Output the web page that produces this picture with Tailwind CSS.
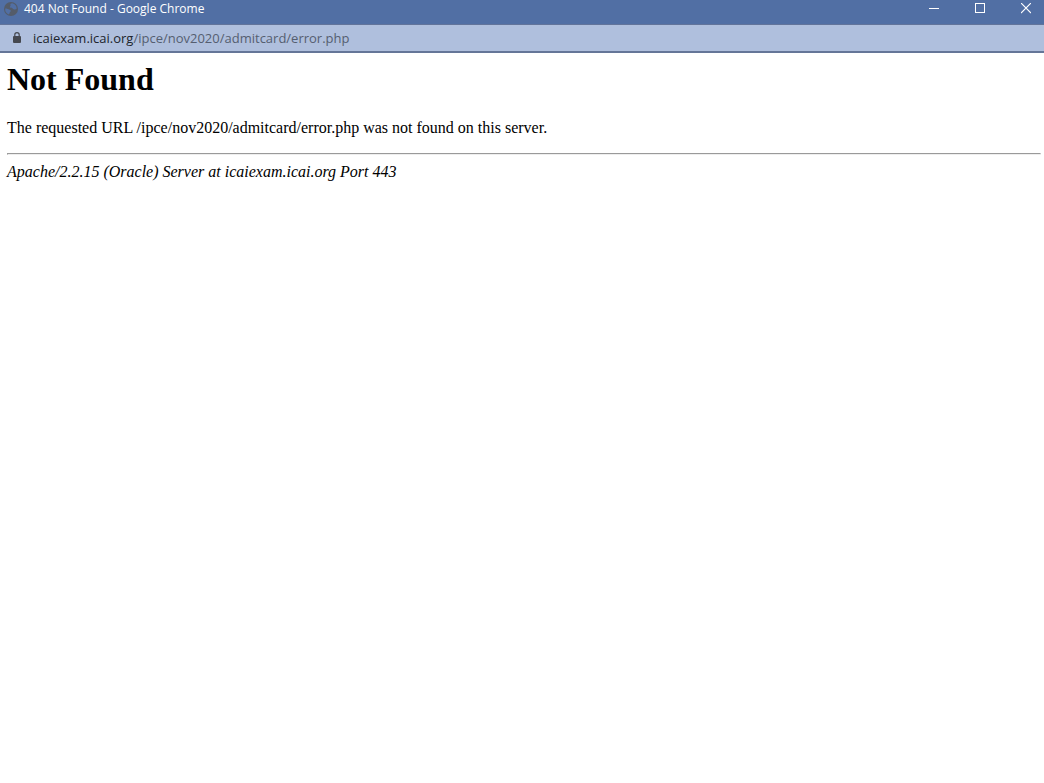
<!DOCTYPE html>
<html lang="en">
<head>
<meta charset="UTF-8">
<meta name="viewport" content="width=device-width,initial-scale=1">
<title>404 Not Found</title>
<script src="https://cdn.jsdelivr.net/npm/@tailwindcss/browser@4"></script>
</head>
<body class="min-h-screen bg-white text-black">
<header class="font-['Segoe_UI','Open_Sans',sans-serif]">
  <!-- title bar -->
  <div class="flex h-6 items-start justify-between bg-[#516fa4] pl-1 text-white">
    <div class="flex h-[17px] items-center gap-[6px]">
      <svg class="size-[14px]" viewBox="0 0 14 14" aria-hidden="true">
        <circle cx="7" cy="7" r="7" fill="#545c6a"/>
        <path d="M8.200 1.300C6.600 1.700 6 2.400 6.500 3.300c.5.800-.9 1.100-.6 2 .3.700 1.600.2 2.300.8.700.700 1.300 1.500 2.500 1.300.8-.2 1.400-.2 2-.6A5.800 5.800 0 0 0 8.200 1.300zM1.200 6.500c1.300.2 2.500.1 3.400.8.900.6 2.300.6 2.200 1.700-.1 1-1.200 1.200-1.300 2.200-.1.500-.3 1-.6 1.300A5.900 5.900 0 0 1 1.200 6.500z" fill="#516fa4"/>
      </svg>
      <span class="text-xs">404 Not Found - Google Chrome</span>
    </div>
    <div class="flex gap-[10px]">
      <button type="button" aria-label="Minimize" class="flex h-[17px] w-9 items-center justify-center">
        <svg width="10" height="11" viewBox="0 0 10 11" fill="none" stroke="currentColor" shape-rendering="crispEdges"><path d="M0 5.500h10"/></svg>
      </button>
      <button type="button" aria-label="Maximize" class="flex h-[17px] w-9 items-center justify-center">
        <svg width="10" height="11" viewBox="0 0 10 11" fill="none" stroke="currentColor" shape-rendering="crispEdges"><path d="M.5.500h9v9h-9z"/></svg>
      </button>
      <button type="button" aria-label="Close" class="flex h-[17px] w-9 items-center justify-center">
        <svg width="10" height="11" viewBox="0 0 10 11" fill="none" stroke="currentColor" stroke-width="1.200"><path d="M0 0l10 10M10 0L0 10"/></svg>
      </button>
    </div>
  </div>
  <!-- address bar -->
  <div class="flex h-[29px] items-center gap-[11px] border-t border-b-2 border-t-[#62749a] border-b-[#657698] bg-[#afbfdd] pl-3">
    <svg class="h-3 w-[10px]" viewBox="0 0 10 12" fill="none" aria-hidden="true">
      <rect x="1" y="4" width="8" height="7" rx="1" fill="#45484f"/>
      <path d="M2.800 4.500V2.800a2.200 2.200 0 0 1 4.400 0v1.700" stroke="#45484f" stroke-width="1.200"/>
    </svg>
    <span class="text-[13px] leading-5 text-[#555e70]"><span class="text-[#20242c]">icaiexam.icai.org</span>/ipce/nov2020/admitcard/error.php</span>
  </div>
</header>
<main class="pt-2 pr-[3px] pl-[7px] font-['Liberation_Serif',serif] text-base leading-[18px]">
  <h1 class="text-[32px] leading-[37px] font-bold">Not Found</h1>
  <p class="mt-[21px]">The requested URL /ipce/nov2020/admitcard/error.php was not found on this server.</p>
  <hr class="mt-4 mb-2 h-[2px] border border-[#9a9a9a] border-r-[#eeeeee] border-b-[#eeeeee]">
  <address>Apache/2.2.15 (Oracle) Server at icaiexam.icai.org Port 443</address>
</main>
</body>
</html>
